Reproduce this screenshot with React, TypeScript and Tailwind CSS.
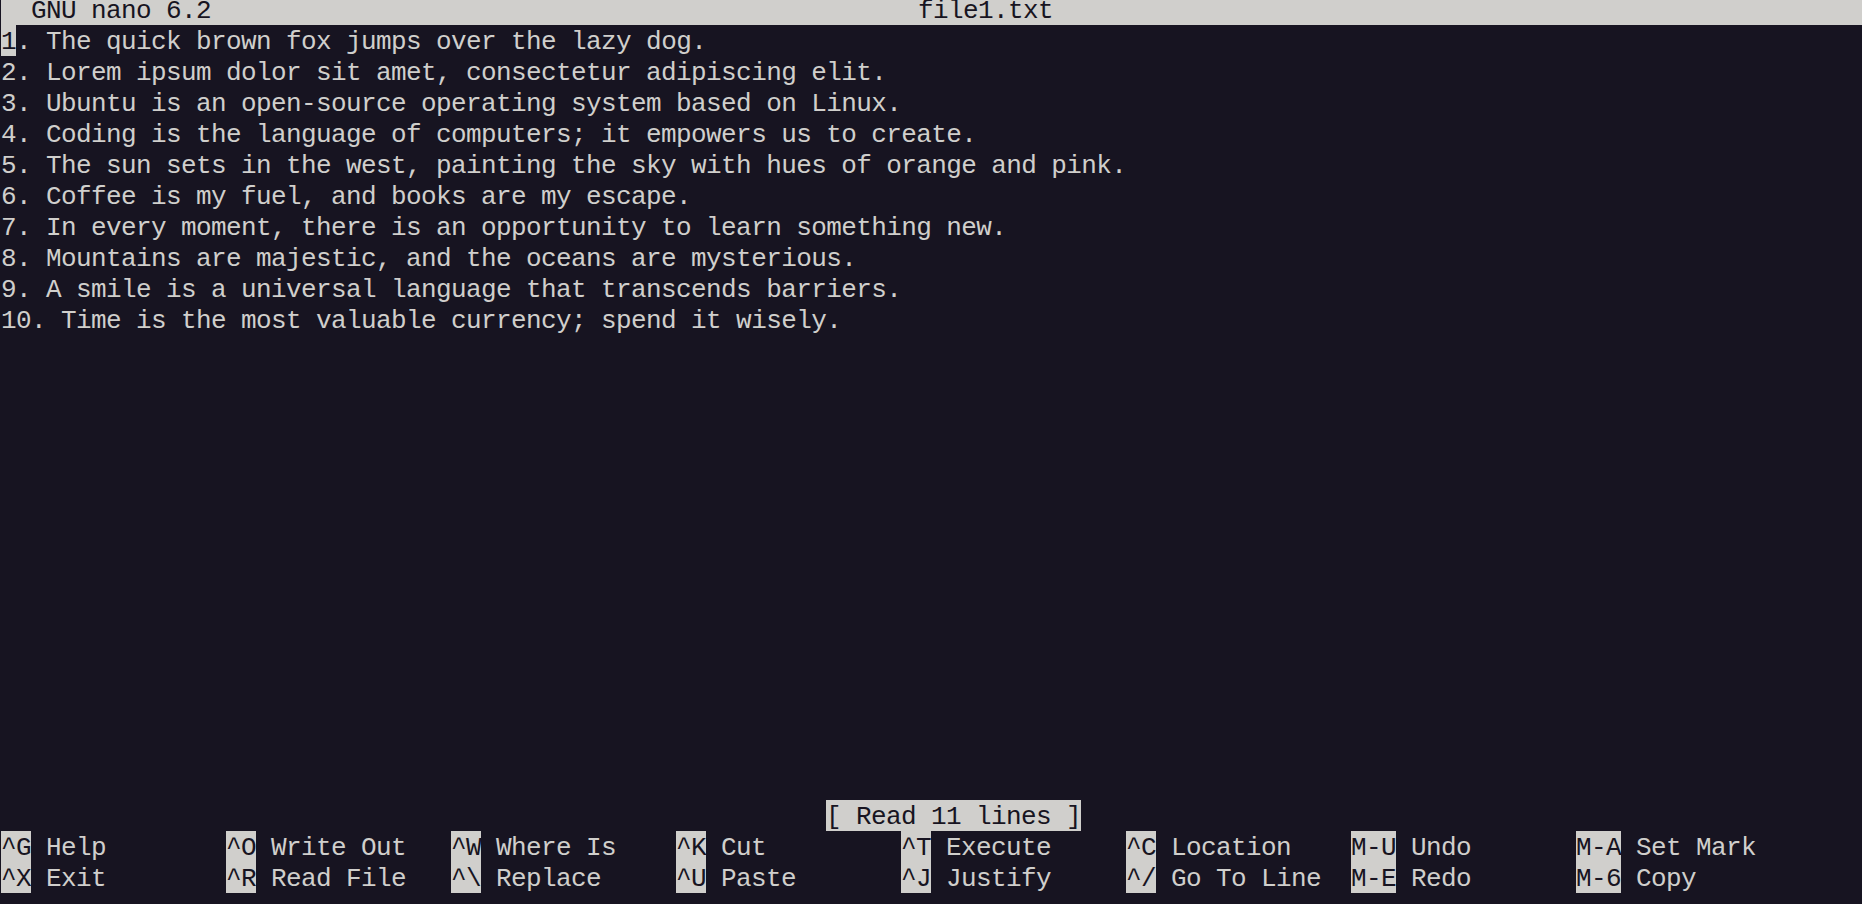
import React from 'react';

const LINES = [
  '1. The quick brown fox jumps over the lazy dog.',
  '2. Lorem ipsum dolor sit amet, consectetur adipiscing elit.',
  '3. Ubuntu is an open-source operating system based on Linux.',
  '4. Coding is the language of computers; it empowers us to create.',
  '5. The sun sets in the west, painting the sky with hues of orange and pink.',
  '6. Coffee is my fuel, and books are my escape.',
  '7. In every moment, there is an opportunity to learn something new.',
  '8. Mountains are majestic, and the oceans are mysterious.',
  '9. A smile is a universal language that transcends barriers.',
  '10. Time is the most valuable currency; spend it wisely.',
];

const TOP = [
  ['^G', 'Help'],
  ['^O', 'Write Out'],
  ['^W', 'Where Is'],
  ['^K', 'Cut'],
  ['^T', 'Execute'],
  ['^C', 'Location'],
  ['M-U', 'Undo'],
  ['M-A', 'Set Mark'],
];

const BOTTOM = [
  ['^X', 'Exit'],
  ['^R', 'Read File'],
  ['^\\', 'Replace'],
  ['^U', 'Paste'],
  ['^J', 'Justify'],
  ['^/', 'Go To Line'],
  ['M-E', 'Redo'],
  ['M-6', 'Copy'],
];

// one terminal cell row: 31px tall, glyph baseline pushed down a few px
const cell = 'block pt-[3px] leading-[28px]';
const inverse = 'bg-[#d0cfcc] text-[#171421]';

function ShortcutRow({ items }: { items: string[][] }) {
  return (
    <div className="flex h-[31px]">
      {items.map(([key, label]) => (
        <div key={key} className="flex w-[225px] shrink-0">
          <span className={`${cell} ${inverse}`}>{key}</span>
          <span className={cell}> {label}</span>
        </div>
      ))}
    </div>
  );
}

export default function App() {
  return (
    <div className="h-[904px] w-[1862px] overflow-hidden bg-[#171421] text-[#d0cfcc]">
      <div className="-mt-[6px] pl-[1px] font-['Liberation_Mono',monospace] text-[26px] tracking-[-0.6px] whitespace-pre">
        {/* title bar */}
        <div className={`flex h-[31px] ${inverse}`}>
          <span className={`${cell} w-[917px] shrink-0`}>  GNU nano 6.2</span>
          <span className={cell}>file1.txt</span>
        </div>

        {/* buffer */}
        <div className="h-[775px]">
          {LINES.map((line, i) => (
            <div key={i} className="flex h-[31px]">
              {i === 0 ? (
                <>
                  <span className={`${cell} ${inverse}`}>1</span>
                  <span className={cell}>{line.slice(1)}</span>
                </>
              ) : (
                <span className={cell}>{line}</span>
              )}
            </div>
          ))}
        </div>

        {/* status line */}
        <div className="flex h-[31px]">
          <span className="w-[825px] shrink-0" />
          <span className={`${cell} ${inverse}`}>[ Read 11 lines ]</span>
        </div>

        <ShortcutRow items={TOP} />
        <ShortcutRow items={BOTTOM} />
      </div>
    </div>
  );
}
